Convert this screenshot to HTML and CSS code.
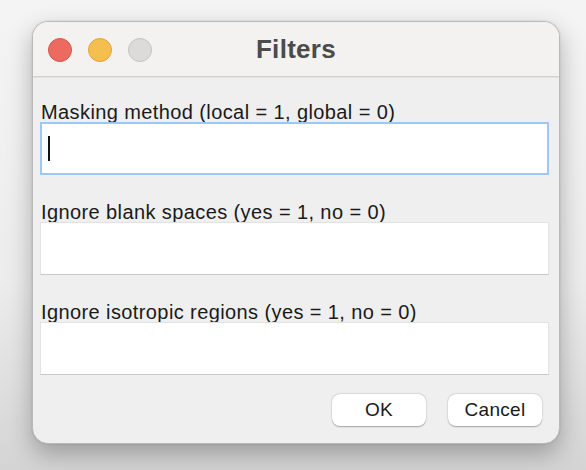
FILE: index.html
```html
<!DOCTYPE html>
<html>
<head>
<meta charset="utf-8">
<link rel="stylesheet" href="styles.css">
</head>
<body>
<div class="window">
  <div class="titlebar">
    <div class="lights">
      <span class="light red"></span>
      <span class="light yellow"></span>
      <span class="light grey"></span>
    </div>
    <div class="title">Filters</div>
  </div>
  <div class="content">
    <div class="group">
      <label class="label">Masking method (local = 1, global = 0)</label>
      <div class="field focused"><span class="caret"></span></div>
    </div>
    <div class="group">
      <label class="label">Ignore blank spaces (yes = 1, no = 0)</label>
      <div class="field"></div>
    </div>
    <div class="group">
      <label class="label">Ignore isotropic regions (yes = 1, no = 0)</label>
      <div class="field"></div>
    </div>
    <div class="buttons">
      <button class="btn">OK</button>
      <button class="btn">Cancel</button>
    </div>
  </div>
</div>
</body>
</html>
```

FILE: styles.css
```css
html, body {
  margin: 0;
  padding: 0;
}
body {
  width: 586px;
  height: 470px;
  overflow: hidden;
  background: linear-gradient(180deg, #f4f4f4 0%, #ececec 60%, #d4d4d4 100%);
  font-family: "Liberation Sans", Arial, sans-serif;
  padding-top: 21px;
  padding-left: 32px;
  box-sizing: border-box;
}
.window {
  width: 528px;
  height: 423px;
  box-sizing: border-box;
  border: 1px solid #b9b9b9;
  border-radius: 16px;
  background: #efefef;
  box-shadow: 0 10px 24px rgba(0,0,0,0.28), 0 0 2px rgba(0,0,0,0.15);
  overflow: hidden;
  display: flex;
  flex-direction: column;
}
.titlebar {
  height: 55px;
  flex: none;
  box-sizing: border-box;
  background: #f3f2f1;
  border-bottom: 1px solid #d3d3d3;
  box-shadow: 0 1px 0 #e2e2e2;
  display: flex;
  align-items: center;
  position: relative;
  padding-top: 2px;
}
.lights {
  display: flex;
  gap: 16px;
  padding-left: 15px;
}
.light {
  width: 24px;
  height: 24px;
  border-radius: 50%;
  box-sizing: border-box;
}
.red { background: #ec6a5f; border: 1px solid #d8574c; }
.yellow { background: #f5bf4f; border: 1px solid #dea53a; }
.grey { background: #dcdbd9; border: 1px solid #c4c3c1; }
.title {
  position: absolute;
  left: 0;
  right: 0;
  top: 12px;
  text-align: center;
  font-weight: bold;
  font-size: 26px;
  letter-spacing: 0.3px;
  color: #4b4b4b;
  line-height: 30px;
}
.content {
  padding: 21px 10px 0 7px;
  display: flex;
  flex-direction: column;
}
.group {
  display: flex;
  flex-direction: column;
  margin-bottom: 23px;
}
.group:nth-of-type(3) {
  margin-bottom: 19px;
}
.label {
  font-size: 20px;
  letter-spacing: 0.4px;
  line-height: 20px;
  padding-top: 4px;
  color: #1a1a1a;
  padding-left: 1px;
}
.field {
  height: 53px;
  box-sizing: border-box;
  background: #fff;
  border: 1px solid #e2e2e2;
  border-bottom-color: #c8c8c8;
  position: relative;
}
.field.focused {
  border: 2px solid #9ec7f4;
}
.caret {
  position: absolute;
  left: 6px;
  top: 12px;
  width: 2px;
  height: 25px;
  background: #111;
}
.buttons {
  display: flex;
  justify-content: flex-end;
  gap: 22px;
  padding-right: 7px;
}
.btn {
  width: 94px;
  height: 32px;
  border: none;
  border-radius: 8px;
  background: #fff;
  box-shadow: 0 0.5px 1.5px rgba(0,0,0,0.3), 0 0 0 0.5px rgba(0,0,0,0.06);
  font-family: "Liberation Sans", Arial, sans-serif;
  font-size: 19px;
  letter-spacing: 0.3px;
  color: #1a1a1a;
  padding: 0;
}
```
